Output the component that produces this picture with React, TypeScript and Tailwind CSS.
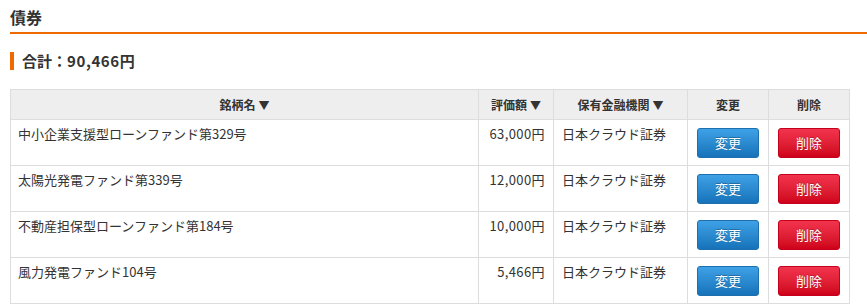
const rows = [
  { name: "中小企業支援型ローンファンド第329号", amount: "63,000円", bank: "日本クラウド証券" },
  { name: "太陽光発電ファンド第339号", amount: "12,000円", bank: "日本クラウド証券" },
  { name: "不動産担保型ローンファンド第184号", amount: "10,000円", bank: "日本クラウド証券" },
  { name: "風力発電ファンド104号", amount: "5,466円", bank: "日本クラウド証券" },
];

function Tri() {
  return <span className="ml-[3px] inline-block align-[0px] text-[11px]">▼</span>;
}

export default function App() {
  return (
    <div
      className="min-h-screen bg-white pl-[10px] text-[#333]"
      style={{ fontFamily: '"Noto Sans CJK JP", "Noto Sans", sans-serif' }}
    >
      <h2 className="border-b-2 border-[#ee6a00] pt-[5px] pb-[3px] text-[16px] leading-[24px] font-bold">
        債券
      </h2>

      <div className="mt-[18px] border-l-[4px] border-[#ee6a00] pl-[8px] text-[15px] leading-[18px] font-bold">
        合計：<span className="tracking-[0.6px]">90,466</span>円
      </div>

      <table className="mt-[19px] w-[839px] table-fixed border-collapse text-[13px]">
        <colgroup>
          <col className="w-[468px]" />
          <col className="w-[75px]" />
          <col className="w-[134px]" />
          <col className="w-[81px]" />
          <col className="w-[81px]" />
        </colgroup>
        <thead>
          <tr className="h-[30px] bg-[#eeeeee] text-[12px] font-bold">
            <th className="border border-[#dddddd] font-bold">
              銘柄名
              <Tri />
            </th>
            <th className="border border-[#dddddd] font-bold">
              評価額
              <Tri />
            </th>
            <th className="border border-[#dddddd] font-bold">
              保有金融機関
              <Tri />
            </th>
            <th className="border border-[#dddddd] font-bold">変更</th>
            <th className="border border-[#dddddd] font-bold">削除</th>
          </tr>
        </thead>
        <tbody>
          {rows.map((r) => (
            <tr key={r.name} className="h-[46px]">
              <td className="border border-[#dddddd] px-[7px] pt-[5px] align-top leading-[18px]">{r.name}</td>
              <td className="border border-[#dddddd] pr-[8px] pt-[5px] text-right align-top leading-[18px] tracking-[0.4px]">
                {r.amount}
              </td>
              <td className="border border-[#dddddd] pl-[8px] pt-[5px] align-top leading-[18px]">{r.bank}</td>
              <td className="border border-[#dddddd] pt-[8px] pb-[7px] text-center align-top">
                <button className="h-[30px] w-[62px] rounded-[3px] border border-[#1d6fae] bg-gradient-to-b from-[#3ea1e6] to-[#1673ba] text-[13px] text-white [text-shadow:0_-1px_0_rgba(0,0,0,0.25)]">
                  変更
                </button>
              </td>
              <td className="border border-[#dddddd] pt-[8px] pb-[7px] text-center align-top">
                <button className="h-[30px] w-[62px] rounded-[3px] border border-[#c4001c] bg-gradient-to-b from-[#f2334d] to-[#cf0019] text-[13px] text-white [text-shadow:0_-1px_0_rgba(0,0,0,0.25)]">
                  削除
                </button>
              </td>
            </tr>
          ))}
        </tbody>
      </table>
    </div>
  );
}
